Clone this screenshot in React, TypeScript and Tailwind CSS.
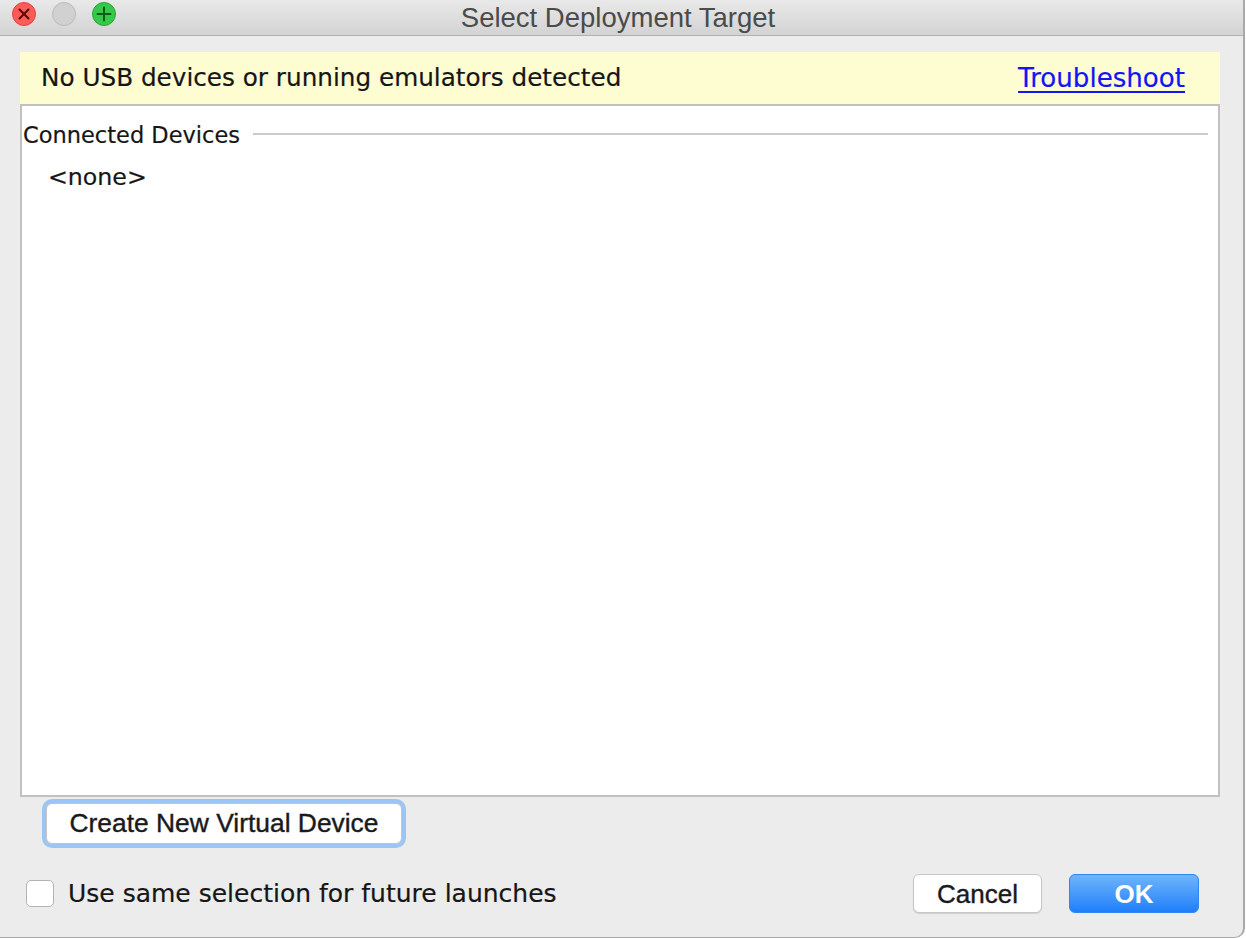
export default function App() {
  return (
    <div className="w-[1246px] h-[938px] bg-white overflow-hidden">
      <div className="w-[1245px] h-[938px] flex flex-col bg-[#ececec] border-r-2 border-b border-[#a9a9a9] rounded-br-[10px] overflow-hidden">
        {/* title bar */}
        <div className="relative h-[36px] shrink-0 flex items-center justify-center pr-[7px] bg-gradient-to-b from-[#e9e9e9] to-[#d3d3d3] border-b border-[#b1b1b1]">
          <div className="absolute left-[12px] top-[2px] flex gap-[16px]">
            <div className="w-[24px] h-[24px] rounded-full bg-[#fc5b57] border border-[#e0443e] flex items-center justify-center">
              <svg width="14" height="14" viewBox="0 0 14 14">
                <path d="M2.5 2.5 L11.5 11.5 M11.5 2.5 L2.5 11.5" stroke="#5a0a07" strokeWidth="2" strokeLinecap="round" />
              </svg>
            </div>
            <div className="w-[24px] h-[24px] rounded-full bg-[#d1d1d1] border border-[#bababa]" />
            <div className="w-[24px] h-[24px] rounded-full bg-[#35c84a] border border-[#25a834] flex items-center justify-center">
              <svg width="16" height="16" viewBox="0 0 16 16">
                <path d="M8 1.5 V14.5 M1.5 8 H14.5" stroke="#0a5e12" strokeWidth="2" strokeLinecap="round" />
              </svg>
            </div>
          </div>
          <span className="font-['Liberation_Sans',Arial,sans-serif] text-[27.5px] leading-none text-[#4b4b4b]">
            Select Deployment Target
          </span>
        </div>

        {/* body */}
        <div className="flex-1 flex flex-col pt-[16px] pl-[20px] pr-[23px] font-['DejaVu_Sans',sans-serif] text-[#161616] [-webkit-text-stroke:0.2px_#161616]">
          <div className="h-[52px] shrink-0 bg-[#fefdd1] flex items-center justify-between pl-[21px] pr-[35px]">
            <span className="text-[24.7px] leading-none">No USB devices or running emulators detected</span>
            <a href="#" className="text-[26.1px] leading-none text-[#1414f5] underline underline-offset-[4px] decoration-2 [-webkit-text-stroke:0.2px_#1414f5]">
              Troubleshoot
            </a>
          </div>

          <div className="h-[693px] shrink-0 bg-white border-2 border-[#c1c1c1] flex flex-col">
            <div className="mt-[14px] h-[30px] flex items-center pl-[1px] pr-[10px]">
              <span className="text-[22.5px] leading-none whitespace-nowrap">Connected Devices</span>
              <div className="ml-[13px] flex-1 h-[2px] bg-[#cbcbcb] -mt-[3px]" />
            </div>
            <div className="mt-[13px] h-[30px] flex items-center pl-[26px]">
              <span className="text-[23.7px] leading-none">&lt;none&gt;</span>
            </div>
          </div>

          <div className="mt-[6px] pl-[26px]">
            <button className="w-[356px] h-[41px] bg-white border border-[#c4c4c4] rounded-[6px] shadow-[0_0_0_4px_#9cc5f4] font-['Liberation_Sans',Arial,sans-serif] text-[26.4px] leading-none text-[#1a1a1a] [-webkit-text-stroke:0.4px_#1a1a1a]">
              Create New Virtual Device
            </button>
          </div>

          <div className="mt-[30px] h-[39px] flex items-center pr-[21px]">
            <div className="ml-[6px] w-[28px] h-[27px] bg-white border border-[#b3b3b3] rounded-[5px]" />
            <span className="ml-[14px] text-[25px] leading-none">Use same selection for future launches</span>
            <div className="flex-1" />
            <button className="w-[129px] h-[39px] bg-white border border-[#c6c6c6] rounded-[6px] shadow-[0_1px_1px_rgba(0,0,0,0.12)] font-['Liberation_Sans',Arial,sans-serif] text-[26px] leading-none text-[#1a1a1a] [-webkit-text-stroke:0.4px_#1a1a1a]">
              Cancel
            </button>
            <button className="ml-[27px] w-[130px] h-[39px] rounded-[6px] bg-gradient-to-b from-[#6db4fb] to-[#1b7ffa] border border-[#2f86f0] font-['Liberation_Sans',Arial,sans-serif] font-bold text-[26px] leading-none text-white [-webkit-text-stroke:0px]">
              OK
            </button>
          </div>
        </div>
      </div>
    </div>
  );
}
